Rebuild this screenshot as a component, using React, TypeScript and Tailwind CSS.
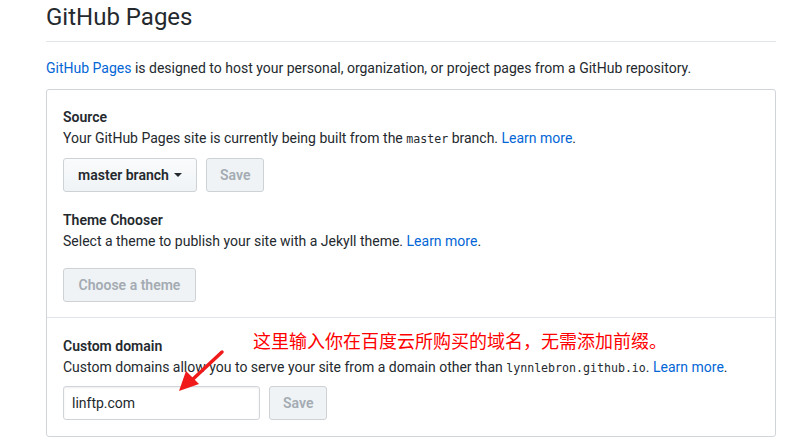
import React from 'react';

const font = { fontFamily: 'Roboto, "Liberation Sans", sans-serif' };
const mono = { fontFamily: '"DejaVu Sans Mono", "Liberation Mono", monospace' };

function GrayButton({ children, disabled, className = '' }: { children: React.ReactNode; disabled?: boolean; className?: string }) {
  return (
    <button
      className={`h-[34px] whitespace-nowrap rounded-[3px] border border-[#cfd2d5] px-[13px] text-[14px] font-semibold ${
        disabled ? 'bg-[#eff3f6] text-[#a4abb2]' : 'bg-gradient-to-b from-[#fafbfc] to-[#eff3f6] text-[#24292e]'
      } ${className}`}
    >
      {children}
    </button>
  );
}

export default function App() {
  return (
    <div className="relative h-[440px] w-[807px] overflow-hidden bg-white text-[#24292e]" style={font}>
      <div className="ml-[46px] w-[730px]">
        {/* Header */}
        <h2 className="border-b border-[#e1e4e8] pt-[2px] pb-[9px] text-[24px] leading-[30px] font-normal">GitHub Pages</h2>

        <p className="mt-[16px] text-[14px] leading-[21px]">
          <a className="text-[#0366d6]">GitHub Pages</a> is designed to host your personal, organization, or project pages from a GitHub repository.
        </p>

        {/* Settings box */}
        <div className="mt-[10px] rounded-[3px] border border-[#d1d5da]">
          <div className="border-b border-[#e1e4e8] px-[16px] pt-[17px] pb-[15px]">
            <h3 className="text-[14px] leading-[21px] font-semibold">Source</h3>
            <p className="text-[14px] leading-[21px]">
              Your GitHub Pages site is currently being built from the{' '}
              <code className="text-[11.6px] leading-none" style={mono}>master</code> branch.{' '}
              <a className="text-[#0366d6]">Learn more</a>.
            </p>
            <div className="mt-[9px] flex gap-[9px]">
              <GrayButton className="flex w-[134px] items-center justify-center gap-[5px]">
                master branch
                <svg width="8" height="4" viewBox="0 0 8 4"><path d="M0 0h8L4 4z" fill="#24292e" /></svg>
              </GrayButton>
              <GrayButton disabled className="w-[58px] px-0">Save</GrayButton>
            </div>

            <h3 className="mt-[18px] text-[14px] leading-[21px] font-semibold">Theme Chooser</h3>
            <p className="text-[14px] leading-[21px]">
              Select a theme to publish your site with a Jekyll theme. <a className="text-[#0366d6]">Learn more</a>.
            </p>
            <div className="mt-[16px]">
              <GrayButton disabled className="w-[133px] px-0">Choose a theme</GrayButton>
            </div>
          </div>

          <div className="px-[16px] pt-[18px] pb-[16px]">
            <h3 className="text-[14px] leading-[21px] font-semibold">Custom domain</h3>
            <p className="text-[14px] leading-[21px]">
              Custom domains allow you to serve your site from a domain other than{' '}
              <code className="text-[11.6px] leading-none" style={mono}>lynnlebron.github.io</code>.{' '}
              <a className="text-[#0366d6]">Learn more</a>.
            </p>
            <div className="mt-[8px] flex gap-[9px]">
              <div className="flex h-[34px] w-[197px] items-center rounded-[3px] border border-[#d1d5da] px-[8px] text-[14px] shadow-[inset_0_1px_2px_rgba(27,31,35,0.075)]">
                linftp.com
              </div>
              <GrayButton disabled className="w-[58px] px-0">Save</GrayButton>
            </div>
          </div>
        </div>
      </div>

      {/* Annotation */}
      <div
        className="absolute left-[253px] top-[328px] whitespace-nowrap text-[18px] leading-[24px] text-[#ff0000]"
        style={{ fontFamily: '"Noto Sans CJK SC", sans-serif' }}
      >
        这里输入你在百度云所购买的域名，无需添加前缀。
      </div>
      <svg className="pointer-events-none absolute left-0 top-0" width="807" height="440" viewBox="0 0 807 440">
        <line x1="222" y1="352" x2="192" y2="380" stroke="#f01a1a" strokeWidth="3.5" strokeLinecap="round" />
        <path d="M179 391 L186 371 L199 384 Z" fill="#f01a1a" />
      </svg>
    </div>
  );
}
